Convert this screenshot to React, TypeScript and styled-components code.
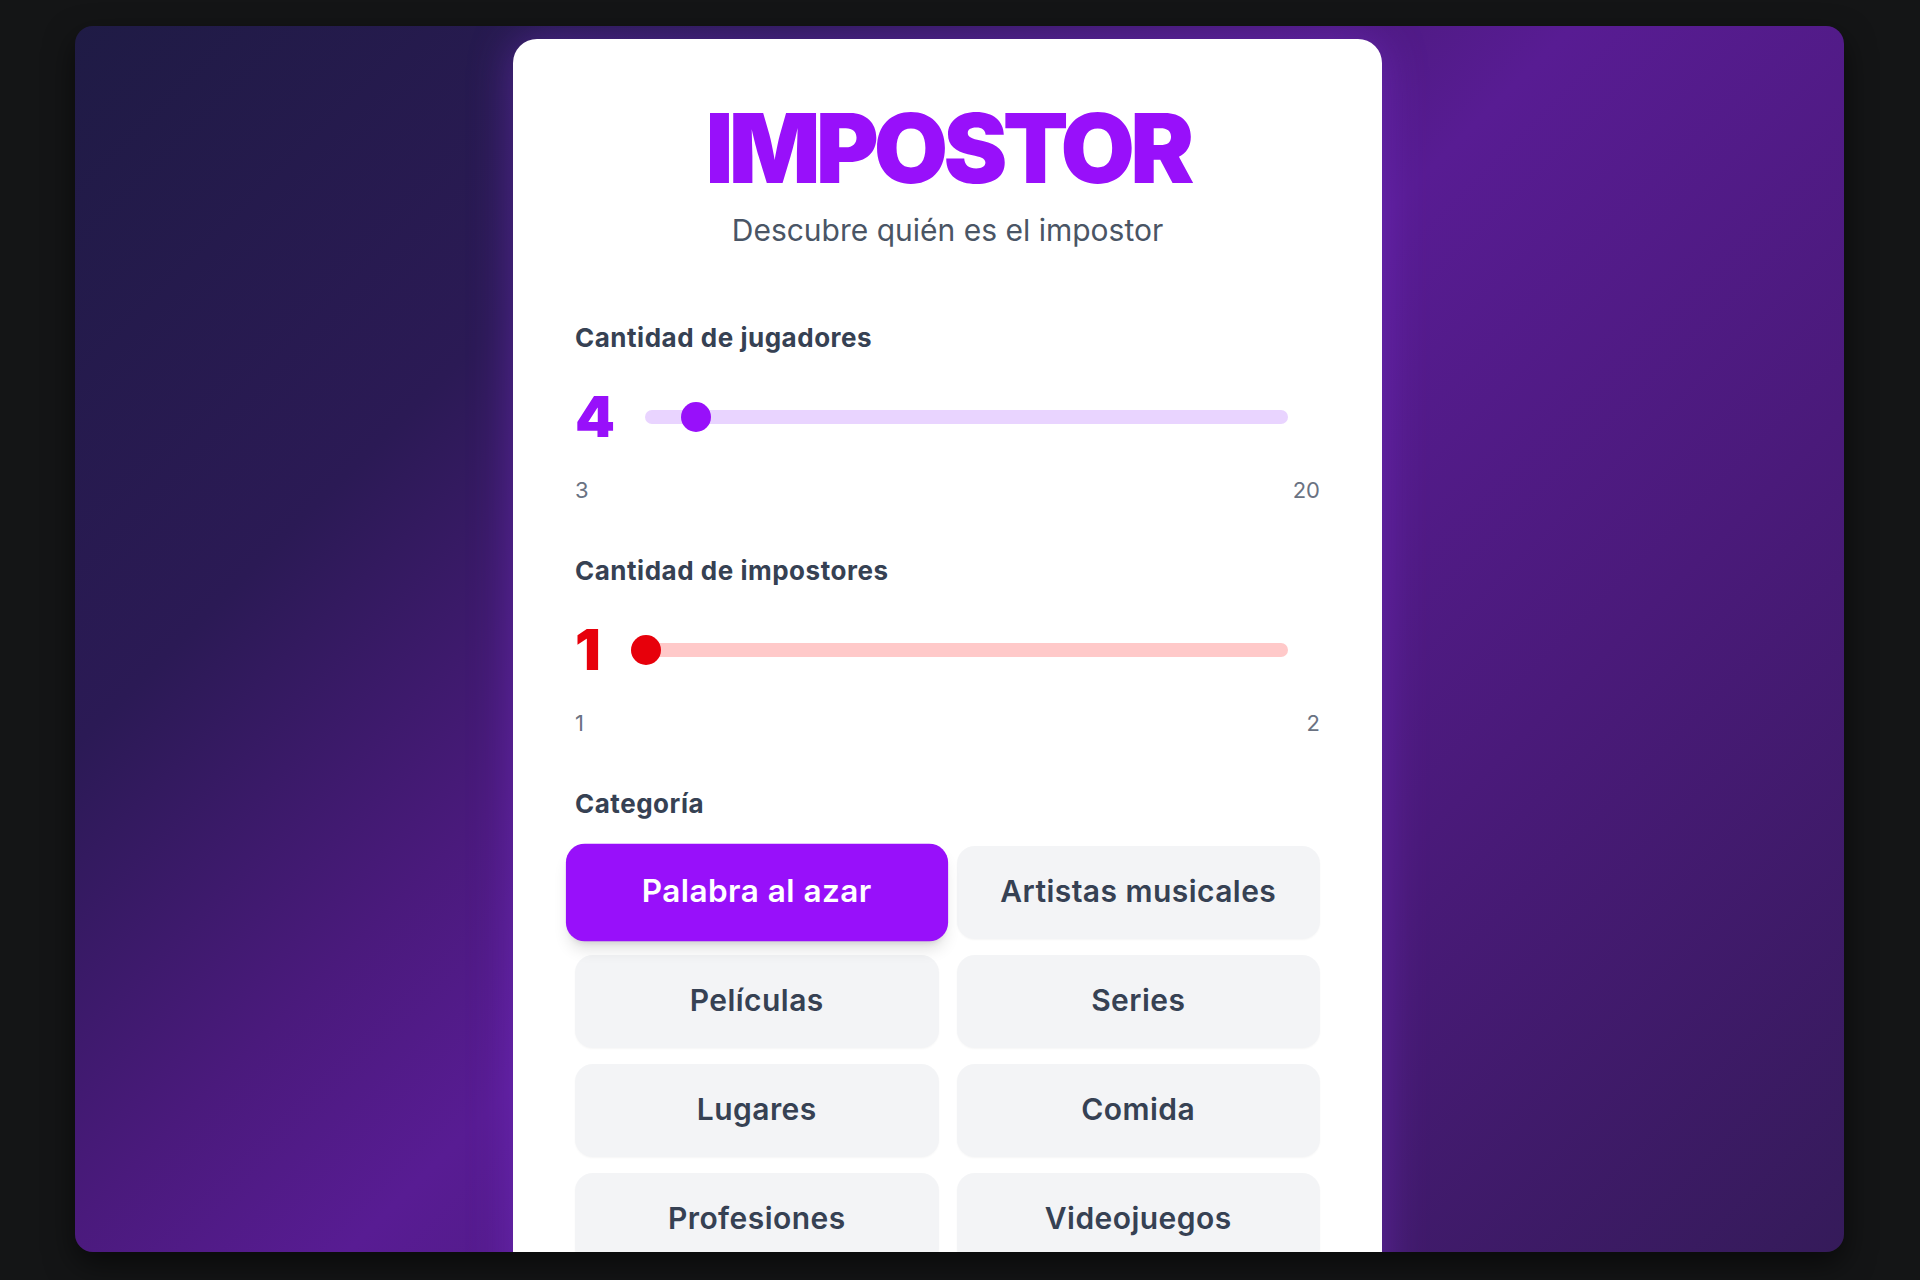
import { useState } from 'react';
import styled, { createGlobalStyle, css } from 'styled-components';

const GlobalStyle = createGlobalStyle`
  * {
    box-sizing: border-box;
  }

  body {
    margin: 0;
    background: #141516;
    font-family: Inter, 'Noto Sans', sans-serif;
  }
`;

const Frame = styled.div`
  width: 1920px;
  height: 1280px;
  padding: 26px 76px 28px 75px;
`;

const Window = styled.div`
  display: flex;
  justify-content: center;
  align-items: flex-start;

  height: 100%;
  padding: 13px 24px 0 0;

  overflow: hidden;
  border-radius: 18px;
  background: linear-gradient(
    135deg,
    #1f1b45 0%,
    #2b1a55 24%,
    #4a1a7c 40%,
    #581c93 50%,
    #4a1a7a 72%,
    #351b5a 100%
  );
  box-shadow: 0 12px 30px rgba(0, 0, 0, 0.55);
`;

const Card = styled.div`
  flex-shrink: 0;
  width: 869px;
  padding: 61px 62px 80px;

  background: #ffffff;
  border-radius: 24px 24px 0 0;
  box-shadow: 0 0 44px rgba(128, 52, 220, 0.45);
`;

const Title = styled.h1`
  margin: 0;

  font-size: 96px;
  line-height: 1;
  font-weight: 900;
  letter-spacing: -0.05em;
  text-align: center;
  color: #9810fa;
`;

const Subtitle = styled.p`
  margin: 15px 0 0;

  font-size: 30px;
  line-height: 1.3;
  text-align: center;
  color: #4a5565;
`;

const Sections = styled.div`
  display: flex;
  flex-direction: column;
  gap: 50px;

  margin-top: 71px;
`;

const Label = styled.div<{ $gap: number }>`
  margin-bottom: ${(p) => p.$gap}px;

  font-size: 26px;
  line-height: 34px;
  font-weight: 700;
  letter-spacing: 0.02em;
  color: #364153;
`;

const SliderRow = styled.div`
  display: flex;
  align-items: center;
  gap: 30px;

  padding-right: 32px;
`;

const Value = styled.span<{ $color: string }>`
  font-size: 57px;
  line-height: 56px;
  font-weight: 900;
  color: ${(p) => p.$color};
`;

const Range = styled.input<{ $thumb: string; $track: string }>`
  flex: 1;
  height: 30px;
  margin: 0;

  appearance: none;
  background: transparent;

  &::-webkit-slider-runnable-track {
    height: 14px;
    border-radius: 7px;
    background: ${(p) => p.$track};
  }

  &::-webkit-slider-thumb {
    appearance: none;
    width: 30px;
    height: 30px;
    margin-top: -8px;

    border-radius: 50%;
    background: ${(p) => p.$thumb};
  }
`;

const Limits = styled.div`
  display: flex;
  justify-content: space-between;

  margin-top: 31px;

  font-size: 22px;
  line-height: 28px;
  color: #6a7282;
`;

const Grid = styled.div`
  display: grid;
  grid-template-columns: 1fr 1fr;
  column-gap: 18px;
  row-gap: 16px;
`;

const CategoryButton = styled.button<{ $active: boolean }>`
  height: 93px;
  padding: 0 0 4px;

  border: none;
  border-radius: 18px;
  background: #f3f4f6;
  box-shadow: 0 1px 2px rgba(0, 0, 0, 0.04);

  font-family: inherit;
  font-size: 30px;
  font-weight: 600;
  letter-spacing: 0.015em;
  color: #364153;

  cursor: pointer;

  ${(p) =>
    p.$active &&
    css`
      background: #9810fa;
      color: #ffffff;
      transform: scale(1.05);
      box-shadow:
        0 10px 15px -3px rgba(0, 0, 0, 0.12),
        0 4px 6px -4px rgba(0, 0, 0, 0.12);
    `}
`;

const categories = [
  'Palabra al azar',
  'Artistas musicales',
  'Películas',
  'Series',
  'Lugares',
  'Comida',
  'Profesiones',
  'Videojuegos',
];

interface ISliderFieldProps {
  label: string;
  min: number;
  max: number;
  value: number;
  color: string;
  track: string;
  onChange: (value: number) => void;
}

const SliderField = ({ label, min, max, value, color, track, onChange }: ISliderFieldProps) => (
  <div>
    <Label $gap={34}>{label}</Label>
    <SliderRow>
      <Value $color={color}>{value}</Value>
      <Range
        type="range"
        min={min}
        max={max}
        value={value}
        $thumb={color}
        $track={track}
        onChange={(e) => onChange(Number(e.target.value))}
      />
    </SliderRow>
    <Limits>
      <span>{min}</span>
      <span>{max}</span>
    </Limits>
  </div>
);

export default function App() {
  const [players, setPlayers] = useState(4);
  const [impostors, setImpostors] = useState(1);
  const [category, setCategory] = useState(categories[0]);

  return (
    <>
      <GlobalStyle />
      <Frame>
        <Window>
          <Card>
            <Title>IMPOSTOR</Title>
            <Subtitle>Descubre quién es el impostor</Subtitle>

            <Sections>
              <SliderField
                label="Cantidad de jugadores"
                min={3}
                max={20}
                value={players}
                color="#9810fa"
                track="#e9d4ff"
                onChange={setPlayers}
              />
              <SliderField
                label="Cantidad de impostores"
                min={1}
                max={2}
                value={impostors}
                color="#e7000b"
                track="#ffc9c9"
                onChange={setImpostors}
              />
              <div>
                <Label $gap={25}>Categoría</Label>
                <Grid>
                  {categories.map((name) => (
                    <CategoryButton
                      key={name}
                      $active={name === category}
                      onClick={() => setCategory(name)}
                    >
                      {name}
                    </CategoryButton>
                  ))}
                </Grid>
              </div>
            </Sections>
          </Card>
        </Window>
      </Frame>
    </>
  );
}
